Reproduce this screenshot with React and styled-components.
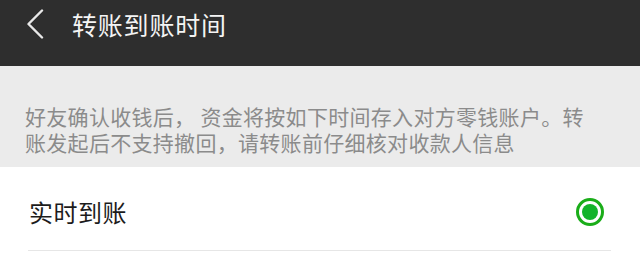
import React from "react";
import styled, { createGlobalStyle } from "styled-components";

const Global = createGlobalStyle`
  html, body { margin: 0; padding: 0; background: #ffffff; }
  body { font-family: "Noto Sans CJK SC", "Noto Sans", sans-serif; }
`;

const Page = styled.div`
  width: 640px;
  height: 256px;
  overflow: hidden;
  background: #ffffff;
`;

const Header = styled.header`
  height: 66px;
  background: #2e2e2e;
  display: flex;
  align-items: flex-start;
  box-sizing: border-box;
  padding-left: 26px;
  padding-top: 9px;
`;

const BackButton = styled.div`
  width: 18px;
  height: 30px;
  display: flex;
  align-items: center;
  justify-content: center;
  margin-right: 28px;
`;

const Title = styled.h1`
  margin: 0;
  font-size: 25px;
  font-weight: 400;
  color: #f4f4f4;
  letter-spacing: 0.8px;
  line-height: 30px;
`;

const Notice = styled.section`
  background: #ebebeb;
  height: 101px;
  box-sizing: border-box;
  padding: 37px 46px 0 25px;
`;

const NoticeText = styled.p`
  margin: 0;
  font-size: 21px;
  line-height: 26px;
  letter-spacing: 0.3px;
  color: #8b8b8b;
  font-weight: 400;
`;

const OptionRow = styled.div`
  margin: 0 29px 0 28px;
  height: 84px;
  box-sizing: border-box;
  padding-top: 7px;
  border-bottom: 1px solid #e6e6e6;
  display: flex;
  align-items: center;
  justify-content: space-between;
`;

const OptionLabel = styled.span`
  font-size: 24px;
  color: #1c1c1c;
  line-height: 30px;
  letter-spacing: 0.5px;
  padding-left: 1px;
`;

const Radio = styled.span`
  width: 28px;
  height: 28px;
  box-sizing: border-box;
  border-radius: 50%;
  border: 3px solid #1aad19;
  display: flex;
  align-items: center;
  justify-content: center;
  margin-right: 7px;
  &::after {
    content: "";
    width: 16px;
    height: 16px;
    border-radius: 50%;
    background: ${(p) => (p.checked ? "#13b32a" : "transparent")};
  }
`;

export default function App() {
  return (
    <Page>
      <Global />
      <Header>
        <BackButton>
          <svg width="18" height="30" viewBox="0 0 18 30">
            <polyline
              points="16,1.5 2.5,15 16,28.5"
              fill="none"
              stroke="#e8e8e8"
              strokeWidth="2.4"
              strokeLinecap="round"
              strokeLinejoin="round"
            />
          </svg>
        </BackButton>
        <Title>转账到账时间</Title>
      </Header>
      <Notice>
        <NoticeText>
          好友确认收钱后， 资金将按如下时间存入对方零钱账户。转账发起后不支持撤回，请转账前仔细核对收款人信息
        </NoticeText>
      </Notice>
      <OptionRow>
        <OptionLabel>实时到账</OptionLabel>
        <Radio checked />
      </OptionRow>
    </Page>
  );
}
